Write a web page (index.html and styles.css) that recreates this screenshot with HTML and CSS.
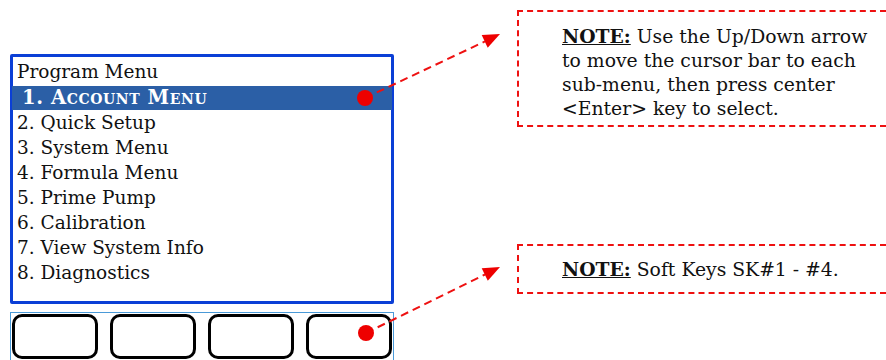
FILE: index.html
```html
<!DOCTYPE html>
<html>
<head>
<meta charset="utf-8">
<link rel="stylesheet" href="styles.css">
</head>
<body>
<div class="page">
  <div class="device">
    <div class="screen">
      <div class="title">Program Menu</div>
      <div class="item selected">1. Account Menu</div>
      <div class="item">2. Quick Setup</div>
      <div class="item">3. System Menu</div>
      <div class="item">4. Formula Menu</div>
      <div class="item">5. Prime Pump</div>
      <div class="item">6. Calibration</div>
      <div class="item">7. View System Info</div>
      <div class="item">8. Diagnostics</div>
    </div>
    <div class="keys">
      <div class="key"></div>
      <div class="key"></div>
      <div class="key"></div>
      <div class="key"></div>
    </div>
  </div>
  <div class="notes">
    <div class="note note-top">
      <p><span class="label">NOTE:</span> Use the Up/Down arrow<br>to move the cursor bar to each<br>sub-menu, then press center<br>&lt;Enter&gt; key to select.</p>
    </div>
    <div class="note note-bottom">
      <p><span class="label">NOTE:</span> Soft Keys SK#1 - #4.</p>
    </div>
  </div>
  <svg class="callouts" width="886" height="360" viewBox="0 0 886 360">
    <line x1="365" y1="98" x2="485" y2="41.4" class="dash"/>
    <polygon points="500,34 487.7,47.7 481.7,35.1" class="head"/>
    <circle cx="365" cy="98" r="8" class="dot"/>
    <line x1="366" y1="333" x2="485" y2="274.5" class="dash"/>
    <polygon points="500,267 487.8,280.8 481.7,268.2" class="head"/>
    <circle cx="366" cy="333" r="8" class="dot"/>
  </svg>
</div>
</body>
</html>
```

FILE: styles.css
```css
html, body {
  margin: 0;
  padding: 0;
  background: #ffffff;
}
body {
  font-family: "DejaVu Serif", "Liberation Serif", serif;
  color: #111111;
  overflow: hidden;
}
.page {
  position: relative;
  width: 886px;
  height: 360px;
  display: flex;
  align-items: flex-start;
}
.device {
  margin-top: 54px;
  margin-left: 10px;
  width: 384px;
  display: flex;
  flex-direction: column;
  gap: 8px;
}
.screen {
  border: 3px solid #0b3fd6;
  border-radius: 2px;
  height: 244px;
  box-sizing: content-box;
  font-size: 18.5px;
}
.title {
  height: 29px;
  line-height: 29px;
  padding-left: 4px;
}
.item {
  height: 25px;
  line-height: 25px;
  padding-left: 4px;
  white-space: nowrap;
}
.item.selected {
  height: 24px;
  line-height: 24px;
  background: #2b5fa6;
  color: #ffffff;
  font-weight: bold;
  font-variant: small-caps;
  font-size: 19.5px;
  letter-spacing: 0.6px;
  padding-left: 10px;
  margin: 0 -1px;
}
.keys {
  border: 1px solid #4a9ad8;
  height: 50px;
  padding: 1px 1px 0 1px;
  display: grid;
  grid-template-columns: repeat(4, 1fr);
  column-gap: 12px;
  align-items: start;
}
.key {
  height: 39px;
  border: 3px solid #000000;
  border-radius: 10px;
}
.notes {
  margin-left: 123px;
  margin-top: 10px;
  display: flex;
  flex-direction: column;
  gap: 117px;
  flex: 1;
}
.note {
  border: 2px dashed #ee1111;
  border-right: none;
  padding-left: 43px;
  font-size: 18.8px;
}
.note p {
  margin: 0;
  line-height: 24px;
  white-space: nowrap;
}
.note-top {
  height: 117px;
  box-sizing: border-box;
  padding-top: 12px;
}
.note-bottom {
  height: 50px;
  box-sizing: border-box;
  padding-top: 11px;
}
.label {
  font-weight: bold;
  text-decoration: underline;
}
.callouts {
  position: absolute;
  left: 0;
  top: 0;
  pointer-events: none;
}
.dash {
  stroke: #ee1111;
  stroke-width: 2;
  stroke-dasharray: 8 5;
}
.head, .dot {
  fill: #ee0000;
}
```
